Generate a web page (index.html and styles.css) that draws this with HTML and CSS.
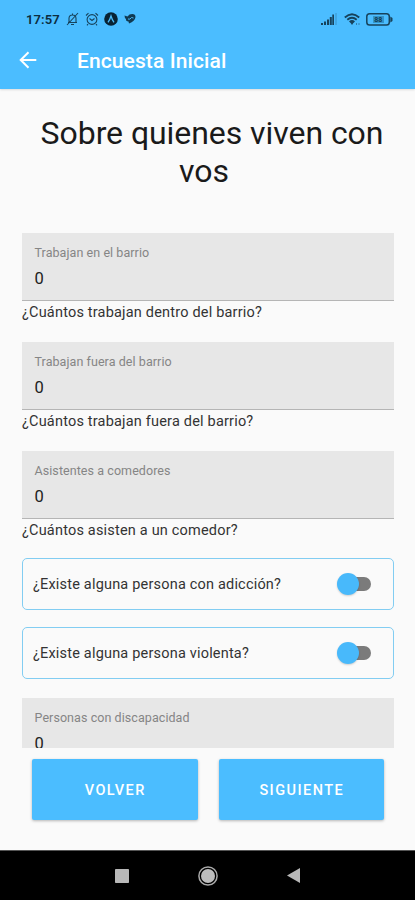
FILE: index.html
```html
<!DOCTYPE html>
<html lang="es">
<head>
<meta charset="utf-8">
<title>Encuesta Inicial</title>
<link rel="stylesheet" href="styles.css">
</head>
<body>
<div class="screen">
  <header class="header">
    <div class="status">
      <span class="clock">17:57</span>
      <svg class="st" width="13" height="14" viewBox="0 0 13 14" fill="none" stroke="#17435c" stroke-width="1.1"><path d="M2 10.5h9M3 10.500V6.500Q3 3 6.500 3T10 6.500V10.500M6.500 3V1.500M5 12.500h3M1 13L12 1"/></svg>
      <svg class="st alarm" width="14" height="14" viewBox="0 0 14 14" fill="none" stroke="#17435c" stroke-width="1.100"><circle cx="7" cy="7.500" r="4.900"/><path d="M1 3.500L3.500 1.200M13 3.500L10.500 1.200M4.500 6.500L7 8.500L9.500 6.500M3 12L2 13.300M11 12L12 13.300"/></svg>
      <svg class="st" width="14" height="14" viewBox="0 0 14 14"><circle cx="7" cy="7" r="6.800" fill="#082334"/><path d="M4 10.300Q6 7.500 7 4Q8 7.500 10 10.300" fill="none" stroke="#4bbdfb" stroke-width="1.300"/></svg>
      <svg class="st bird" width="12" height="12" viewBox="0 0 12 12"><path d="M.5 2.500L3.500 3.500L5.500 1.500Q11.500 0 11.500 4Q11 8 5 10.500L4.500 8.500Q1.500 8 2 6Q.5 5 .5 2.500Z" fill="#103a52"/><path d="M4 6Q6 7 7.500 4.500L9.500 5" fill="none" stroke="#4bbdfb"/></svg>
      <span class="spacer"></span>
      <svg width="16" height="13" viewBox="0 0 16 13" fill="#17435c"><path d="M0 10h2v2H0zM3 8.500h2V12H3zM6 6.500h2V12H6zM8.800 4h2v8h-2z"/><path d="M11.300 1.500h1.700V12h-1.700z"/><path d="M14.500 0h1v12h-1z" opacity=".35"/></svg>
      <svg class="wifi" width="17" height="13" viewBox="0 0 17 13" fill="none" stroke="#17435c" stroke-width="1.800"><path d="M.8 4.500Q8 -2 15.200 4.500M3.300 6.800Q8 2.800 12.700 6.800M5.600 9Q8 7 10.400 9"/><path d="M6 9h4L8 12z" fill="#17435c" stroke="none"/><path d="M12 11h1M14.500 11h1" stroke-width="1"/></svg>
      <svg class="battery" width="27" height="13" viewBox="0 0 27 13"><rect x=".8" y=".8" width="22.500" height="11.200" rx="2.800" fill="none" stroke="#17435c" stroke-width="1.500"/><path d="M24.300 3.500L26.500 5v3L24.300 9.500z" fill="#17435c"/><rect x="7" y="3" width="11" height="7" fill="#3394c9"/><text x="12.300" y="9.300" text-anchor="middle" class="level">88</text></svg>
    </div>
    <div class="appbar">
      <svg width="18" height="18" viewBox="0 0 18 18" fill="none" stroke="#fff" stroke-width="2"><path d="M17.300 9H2M9.500 1.200L1.700 9L9.500 16.800"/></svg>
      <h1 class="apptitle">Encuesta Inicial</h1>
    </div>
  </header>
  <main class="form">
    <h2 class="heading">Sobre quienes viven con<br>vos</h2>
    <div class="group"><div class="field"><span class="label">Trabajan en el barrio</span><span class="value">0</span></div><p class="help">¿Cuántos trabajan dentro del barrio?</p></div>
    <div class="group"><div class="field"><span class="label">Trabajan fuera del barrio</span><span class="value">0</span></div><p class="help">¿Cuántos trabajan fuera del barrio?</p></div>
    <div class="group"><div class="field"><span class="label">Asistentes a comedores</span><span class="value">0</span></div><p class="help">¿Cuántos asisten a un comedor?</p></div>
    <div class="option"><span>¿Existe alguna persona con adicción?</span><span class="switch"></span></div>
    <div class="option"><span>¿Existe alguna persona violenta?</span><span class="switch"></span></div>
    <div class="group last"><div class="field"><span class="label">Personas con discapacidad</span><span class="value">0</span></div></div>
  </main>
  <div class="actions">
    <button class="btn">VOLVER</button>
    <button class="btn">SIGUIENTE</button>
  </div>
  <nav class="nav">
    <svg width="14" height="14" viewBox="0 0 14 14"><rect width="14" height="14" rx=".8" fill="#b8b8b8"/></svg>
    <svg width="20" height="20" viewBox="0 0 20 20"><circle cx="10" cy="10" r="9.100" fill="none" stroke="#aaa" stroke-width="1.500"/><circle cx="10" cy="10" r="7" fill="#bdbdbd"/></svg>
    <svg width="14" height="15" viewBox="0 0 14 15"><path d="M0 7.500L13 0V15Z" fill="#b8b8b8"/></svg>
  </nav>
</div>
</body>
</html>
```
FILE: styles.css
```css
* { box-sizing: border-box; }
body { margin: 0; font-family: Roboto, "Liberation Sans", sans-serif; background: #fafafa; color: #222; }
.screen { width: 415px; height: 900px; display: flex; flex-direction: column; overflow: hidden; }
.header { height: 89px; flex: none; background: #4bbdff; box-shadow: 0 1px 2px rgba(0, 0, 0, .12); }
.status { height: 38px; padding: 0 22px 0 26px; display: flex; align-items: center; }
.clock { width: 40px; font-size: 13px; font-weight: 600; letter-spacing: .1px; color: #0c2d40; }
.st { margin-right: 6px; flex: none; }
.st.alarm { margin-right: 5px; }
.bird { margin-top: -1px; }
.spacer { flex: 1; }
.wifi { margin-left: 7px; }
.battery { margin-left: 5px; }
.level { font-size: 7px; font-weight: 700; fill: #103a52; }
.appbar { height: 44px; padding-left: 19px; display: flex; align-items: center; gap: 40px; }
.apptitle { margin: 1px 0 0; font-size: 21px; font-weight: 500; line-height: 24px; color: #fff; letter-spacing: .1px; }
.form { height: 659px; flex: none; overflow: hidden; padding: 26px 21px 0 22px; }
.heading { margin: 0 0 43px; padding-right: 8px; font-size: 32px; font-weight: 400; line-height: 37.500px; letter-spacing: -.06px; text-align: center; text-indent: 16px; color: #1a1a1a; white-space: nowrap; }
.group { height: 109px; }
.field { height: 68px; padding: 12px 13px 0 12.500px; background: #e7e7e7; border-bottom: 1px solid #b5b5b5; display: flex; flex-direction: column; }
.label { font-size: 12.500px; line-height: 16px; letter-spacing: .07px; color: #858585; }
.value { margin-top: 8px; font-size: 16.500px; line-height: 20px; color: #222; }
.help { margin: 3px 0 0; font-size: 14.500px; line-height: 18px; letter-spacing: .19px; color: #333; }
.option { height: 52px; margin-bottom: 17px; padding: 0 22px 0 10px; border: 1px solid #82cdf2; border-radius: 5px; display: flex; align-items: center; justify-content: space-between; font-size: 14.500px; letter-spacing: .19px; color: #333; }
.group + .option { margin-top: -2px; }
.last { margin-top: 19px; }
.switch { width: 34px; height: 22px; display: flex; align-items: center; }
.switch::before { content: ""; width: 22px; height: 22px; flex: none; border-radius: 50%; background: #48b9fb; box-shadow: 0 1px 2px rgba(0, 0, 0, .18); z-index: 1; }
.switch::after { content: ""; width: 24px; height: 14px; margin-left: -12px; flex: none; border-radius: 7px; background: #7b7b7b; }
.actions { height: 102px; flex: none; padding: 11px 31px 0 32px; display: flex; gap: 21px; }
.btn { flex: 1 1 0; height: 61px; border: 0; border-radius: 2px; background: #4bbdff; color: #fff; font: 500 14.500px/20px Roboto, sans-serif; letter-spacing: 1.450px; box-shadow: 0 1px 3px rgba(0, 0, 0, .28); padding: 2px 0 0 1px; }
.nav { flex: 1; background: #000; border-top: 1px solid #555; display: flex; align-items: center; justify-content: center; gap: 69px; }
```
